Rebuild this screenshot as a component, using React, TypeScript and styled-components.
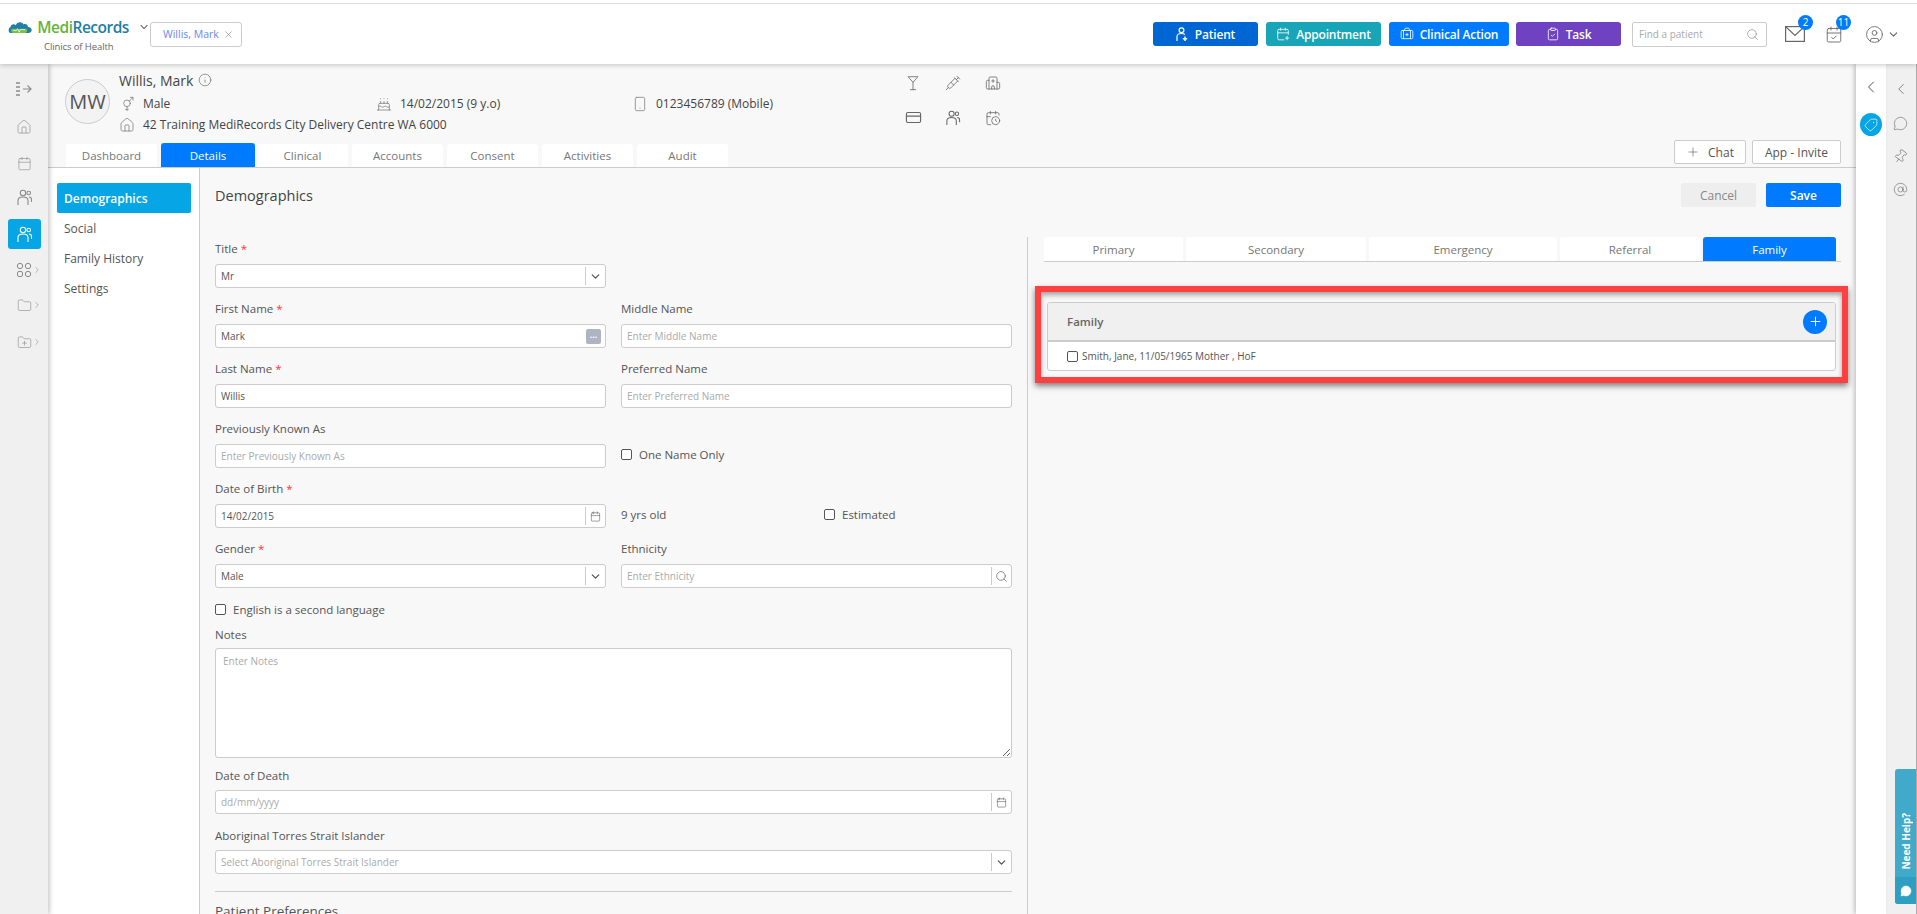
import React from "react";
import styled, { createGlobalStyle } from "styled-components";
import {
  AtSign,
  BriefcaseMedical,
  Cake,
  Calendar,
  CalendarCheck,
  CalendarClock,
  CalendarPlus,
  ChevronDown,
  ChevronLeft,
  ChevronRight,
  CircleUser,
  ClipboardCheck,
  CreditCard,
  Folder,
  FolderPlus,
  Hospital,
  House,
  Info,
  Martini,
  MessageCircle,
  Pin,
  Plus,
  Printer,
  Search,
  Smartphone,
  Syringe,
  Tag,
  Users,
  VenusAndMars,
  X,
} from "lucide-react";

const GlobalStyle = createGlobalStyle`
  html, body { margin: 0; padding: 0; height: 100%; overflow: hidden; }
  * { box-sizing: border-box; }
  body { font-family: "Open Sans", "Noto Sans", sans-serif; color: #555; background: #fff; }
`;

const Page = styled.div`
  position: relative;
  width: 1917px;
  height: 914px;
  display: flex;
  flex-direction: column;
  overflow: hidden;
  border-top: 3px solid #fff;
`;
const TopBar = styled.header`
  position: relative;
  z-index: 5;
  height: 61px;
  flex: none;
  display: flex;
  align-items: center;
  padding: 0 0 0 8px;
  background: #fff;
  border-top: 1px solid #dfdfdf;
  box-shadow: 0 1px 5px rgba(0, 0, 0, 0.22);
`;
const Brand = styled.div`
  display: flex;
  flex-direction: column;
  width: 142px;
  flex: none;
  margin-top: 2px;
`;
const BrandRow = styled.div`
  display: flex;
  align-items: center;
  gap: 5px;
  height: 20px;
`;
const BrandName = styled.span`
  font-size: 15.5px;
  font-weight: 600;
  letter-spacing: -0.5px;
  color: #1f7fa6;
`;
const BrandGreen = styled.span`
  color: #68b23a;
`;
const BrandSub = styled.div`
  font-size: 9.5px;
  color: #666;
  margin: 3px 0 0 36px;
  letter-spacing: -0.1px;
`;
const PatientChip = styled.div`
  width: 92px;
  height: 25px;
  flex: none;
  display: flex;
  align-items: center;
  justify-content: space-between;
  padding: 0 7px 0 12px;
  border: 1px solid #ccc;
  border-radius: 3px;
  font-size: 10.5px;
  color: #5a7cf0;
  color: #6c86f2;
`;
const ActionGroup = styled.div`
  margin-left: auto;
  display: flex;
  align-items: center;
`;
const ActionButton = styled.button<{ $bg: string; $w: number; $gap: number }>`
  width: ${(p) => p.$w}px;
  height: 24px;
  margin-right: ${(p) => p.$gap}px;
  display: flex;
  align-items: center;
  justify-content: center;
  gap: 6px;
  padding: 0;
  border: 0;
  border-radius: 3px;
  background: ${(p) => p.$bg};
  color: #fff;
  font-family: inherit;
  font-size: 12px;
  font-weight: 600;
  letter-spacing: -0.2px;
`;
const FindBox = styled.div`
  width: 135px;
  height: 25px;
  display: flex;
  align-items: center;
  justify-content: space-between;
  padding: 0 7px 0 6px;
  border: 1px solid #ccc;
  border-radius: 2px;
  font-size: 10px;
  color: #aaa;
  margin: 0 18px 0 11px;
`;
const NotifyIcon = styled.div<{ $w: number }>`
  position: relative;
  width: ${(p) => p.$w}px;
  height: 24px;
  display: flex;
  align-items: center;
  color: #666;
`;
const Badge = styled.span`
  position: absolute;
  top: -7px;
  right: -8px;
  min-width: 15px;
  height: 15px;
  border-radius: 50%;
  background: #007bff;
  color: #fff;
  font-size: 10px;
  line-height: 15px;
  text-align: center;
`;
const UserMenu = styled.div`
  display: flex;
  align-items: center;
  gap: 3px;
  color: #666;
  margin: 0 17px 0 22px;
`;

const Body = styled.div`
  flex: 1;
  display: flex;
  min-height: 0;
`;
const SideBar = styled.nav`
  position: relative;
  z-index: 3;
  width: 48px;
  flex: none;
  display: flex;
  flex-direction: column;
  align-items: center;
  background: #f0f0f0;
  box-shadow: 2px 0 4px rgba(0, 0, 0, 0.2);
  padding-top: 10px;
  color: #8b8b8b;
`;
const SideIcon = styled.div<{ $active?: boolean; $mb: number }>`
  position: relative;
  width: 33px;
  height: 30px;
  margin-bottom: ${(p) => p.$mb}px;
  display: flex;
  align-items: center;
  justify-content: center;
  border-radius: 3px;
  background: ${(p) => (p.$active ? "#06a5e6" : "transparent")};
  color: ${(p) => (p.$active ? "#fff" : "#8b8b8b")};
`;
const SideCaret = styled.span`
  position: absolute;
  right: -1px;
  top: 10px;
  display: flex;
  color: #aaa;
`;
const Main = styled.main`
  flex: 1;
  min-width: 0;
  display: flex;
  flex-direction: column;
  background: #f8f8f8;
`;
const PatientHeader = styled.section`
  height: 79px;
  flex: none;
  display: flex;
  padding-left: 17px;
`;
const Avatar = styled.div`
  width: 45px;
  height: 45px;
  margin-top: 15px;
  flex: none;
  display: flex;
  align-items: center;
  justify-content: center;
  border: 1px solid #ccc;
  border-radius: 50%;
  background: #f3f3f3;
  font-size: 20px;
  color: #555;
`;
const PatientInfo = styled.div`
  width: 774px;
  flex: none;
  margin-left: 9px;
  padding-top: 7px;
`;
const PatientName = styled.div`
  display: flex;
  align-items: center;
  gap: 5px;
  height: 18px;
  font-size: 14px;
  color: #444;
`;
const InfoRow = styled.div`
  display: grid;
  grid-template-columns: 257px 256px auto;
  height: 21px;
  align-items: center;
  margin-top: 4px;
`;
const InfoItem = styled.div`
  display: flex;
  align-items: center;
  gap: 8px;
  font-size: 12px;
  color: #444;
  white-space: nowrap;
  svg {
    color: #777;
    flex: none;
  }
`;
const AlertGrid = styled.div`
  display: grid;
  grid-template-columns: repeat(3, 40px);
  grid-auto-rows: 35px;
  padding-top: 1px;
  color: #666;
  > * {
    display: flex;
    align-items: center;
    justify-content: center;
  }
`;
const TabRow = styled.div`
  height: 25px;
  flex: none;
  display: flex;
  align-items: flex-end;
  padding: 0 15px 0 18px;
  margin-left: 2px;
  margin-left: 0;
  border-bottom: 1px solid #ccc;
`;
const MainTab = styled.div<{ $active?: boolean }>`
  width: ${(p) => (p.$active ? 94 : 91)}px;
  height: ${(p) => (p.$active ? 24 : 23)}px;
  margin-right: ${(p) => (p.$active ? 2 : 4)}px;
  display: flex;
  align-items: center;
  justify-content: center;
  border-radius: 3px 3px 0 0;
  background: ${(p) => (p.$active ? "#007bff" : "#fff")};
  color: ${(p) => (p.$active ? "#fff" : "#777")};
  font-size: 11.5px;
`;
const HeaderButtons = styled.div`
  margin-left: auto;
  align-self: flex-start;
  margin-top: -3px;
  display: flex;
  gap: 6px;
`;
const OutlineButton = styled.button<{ $w: number }>`
  width: ${(p) => p.$w}px;
  height: 24px;
  display: flex;
  align-items: center;
  justify-content: center;
  gap: 8px;
  padding: 0;
  border: 1px solid #ccc;
  border-radius: 2px;
  background: #fff;
  color: #555;
  font-family: inherit;
  font-size: 12px;
`;
const Content = styled.div`
  flex: 1;
  display: flex;
  min-height: 0;
`;
const SubNav = styled.aside`
  width: 152px;
  flex: none;
  padding: 15px 8px 0 9px;
  background: #fff;
  border-right: 1px solid #ccc;
`;
const SubNavItem = styled.div<{ $active?: boolean }>`
  height: 30px;
  display: flex;
  align-items: center;
  padding-left: 7px;
  border-radius: 2px;
  background: ${(p) => (p.$active ? "#06a5e6" : "transparent")};
  color: ${(p) => (p.$active ? "#fff" : "#555")};
  font-size: 12px;
  font-weight: ${(p) => (p.$active ? 600 : 400)};
`;
const Panel = styled.div`
  flex: 1;
  min-width: 0;
  display: flex;
  flex-direction: column;
`;
const PanelHead = styled.div`
  height: 69px;
  flex: none;
  display: flex;
  justify-content: space-between;
  align-items: flex-start;
  padding: 15px 15px 0 15px;
`;
const PanelTitle = styled.h2`
  margin: 3px 0 0;
  font-size: 14.5px;
  line-height: 20px;
  font-weight: 400;
  color: #444;
`;
const PanelButtons = styled.div`
  display: flex;
  gap: 10px;
`;
const FlatButton = styled.button<{ $primary?: boolean }>`
  width: 75px;
  height: 24px;
  padding: 0;
  border: 0;
  border-radius: 2px;
  background: ${(p) => (p.$primary ? "#007bff" : "#eee")};
  color: ${(p) => (p.$primary ? "#fff" : "#888")};
  font-family: inherit;
  font-size: 12px;
  font-weight: ${(p) => (p.$primary ? 600 : 400)};
`;
const Split = styled.div`
  flex: 1;
  display: flex;
  min-height: 0;
`;
const FormColumn = styled.form`
  width: 827px;
  flex: none;
  padding: 2px 15px 0;
`;
const FormRow = styled.div<{ $h?: number }>`
  display: grid;
  grid-template-columns: 391px 391px;
  column-gap: 15px;
  height: ${(p) => p.$h ?? 60}px;
`;
const Field = styled.div`
  display: flex;
  flex-direction: column;
`;
const Label = styled.label`
  height: 20px;
  line-height: 20px;
  margin-bottom: 5px;
  font-size: 11.5px;
  color: #555;
`;
const Required = styled.span`
  color: #f33;
  margin-left: 3px;
`;
const Control = styled.div`
  height: 24px;
  display: flex;
  align-items: center;
  border: 1px solid #ccc;
  border-radius: 3px;
  background: #fff;
`;
const TextInput = styled.input`
  flex: 1;
  min-width: 0;
  height: 100%;
  padding: 0 5px;
  border: 0;
  outline: 0;
  background: transparent;
  font-family: inherit;
  font-size: 10px;
  color: #555;
  &::placeholder {
    color: #aaa;
    opacity: 1;
  }
`;
const Addon = styled.span`
  width: 20px;
  height: 18px;
  flex: none;
  display: flex;
  align-items: center;
  justify-content: center;
  border-left: 1px solid #ccc;
  color: #555;
`;
const MoreDots = styled.span`
  width: 15px;
  height: 15px;
  margin-right: 4px;
  flex: none;
  display: flex;
  align-items: center;
  justify-content: center;
  border-radius: 2px;
  background: #aeb4c2;
  color: #fff;
  font-size: 9px;
  font-weight: 700;
  line-height: 9px;
`;
const CheckLine = styled.label<{ $pt?: number }>`
  display: flex;
  align-items: center;
  gap: 7px;
  height: 20px;
  margin-top: ${(p) => p.$pt ?? 0}px;
  font-size: 11.5px;
  color: #555;
`;
const Box = styled.input.attrs({ type: "checkbox" })`
  width: 11px;
  height: 11px;
  margin: 0;
  flex: none;
  appearance: none;
  border: 1px solid #555;
  border-radius: 2px;
  background: #fff;
`;
const AgeCells = styled.div`
  display: grid;
  grid-template-columns: 203px auto;
  align-items: center;
  height: 20px;
  margin-top: 25px;
  font-size: 11.5px;
`;
const NotesArea = styled.textarea`
  display: block;
  width: 100%;
  height: 110px;
  padding: 5px 7px;
  border: 1px solid #ccc;
  border-radius: 3px;
  background: #fff;
  outline: 0;
  font-family: inherit;
  font-size: 10px;
  &::placeholder {
    color: #aaa;
    opacity: 1;
  }
`;
const WideField = styled.div<{ $mb: number }>`
  margin-bottom: ${(p) => p.$mb}px;
  width: 797px;
  ${Label} {
    display: block;
  }
`;
const Divider = styled.hr`
  width: 797px;
  margin: 0;
  border: 0;
  border-top: 1px solid #ccc;
`;
const SectionTitle = styled.div`
  margin-top: 10px;
  font-size: 13.5px;
  color: #555;
`;
const LinkColumn = styled.div`
  flex: 1;
  min-width: 0;
  padding: 0 15px 0 16px;
  border-left: 1px solid #ccc;
`;
const LinkTabs = styled.div`
  display: flex;
  height: 25px;
  gap: 3px;
  align-items: flex-start;
  border-bottom: 1px solid #ccc;
`;
const LinkTab = styled.div<{ $w: number; $active?: boolean }>`
  width: ${(p) => p.$w}px;
  height: 24px;
  display: flex;
  align-items: center;
  justify-content: center;
  border-radius: 3px 3px 0 0;
  background: ${(p) => (p.$active ? "#007bff" : "#fff")};
  color: ${(p) => (p.$active ? "#fff" : "#777")};
  font-size: 11.5px;
`;
const Highlight = styled.div`
  margin: 24px -7px 0 -9px;
  padding: 10px 6px 6px;
  border: 6px solid #ff4040;
  box-shadow: 0 3px 6px rgba(0, 0, 0, 0.5), inset 0 3px 5px rgba(0, 0, 0, 0.35);
`;
const FamilyCard = styled.div`
  border: 1px solid #ccc;
  border-radius: 3px;
  background: #fff;
  overflow: hidden;
`;
const FamilyHead = styled.div`
  height: 39px;
  display: flex;
  align-items: center;
  justify-content: space-between;
  padding: 0 8px 0 19px;
  background: #f0f0f0;
  border-bottom: 2px solid #ccc;
  font-size: 11.5px;
  font-weight: 600;
  color: #666;
`;
const RoundAdd = styled.span`
  width: 24px;
  height: 24px;
  display: flex;
  align-items: center;
  justify-content: center;
  border-radius: 50%;
  background: #007bff;
  color: #fff;
`;
const FamilyRow = styled.div`
  height: 28px;
  display: flex;
  align-items: center;
  gap: 4px;
  padding-left: 19px;
  font-size: 10px;
  color: #555;
`;
const RailOne = styled.aside`
  position: relative;
  z-index: 2;
  width: 30px;
  flex: none;
  display: flex;
  flex-direction: column;
  align-items: center;
  padding-top: 13px;
  background: #fff;
  box-shadow: -2px 0 4px rgba(0, 0, 0, 0.2);
  color: #555;
`;
const TagBubble = styled.span`
  width: 22px;
  height: 23px;
  margin-top: 16px;
  display: flex;
  align-items: center;
  justify-content: center;
  border-radius: 50%;
  background: #06a5e6;
  color: #fff;
`;
const RailTwo = styled.aside`
  width: 31px;
  flex: none;
  display: flex;
  flex-direction: column;
  align-items: center;
  gap: 18px;
  padding: 16px 1px 0 0;
  background: #f0f0f0;
  border-right: 1px solid #aaa;
  color: #777;
`;
const PrintTab = styled.div`
  position: absolute;
  left: 0;
  top: 807px;
  width: 12px;
  height: 30px;
  display: flex;
  align-items: center;
  justify-content: flex-end;
  overflow: hidden;
  background: #444;
  color: #fff;
  box-shadow: 1px 1px 2px rgba(0, 0, 0, 0.4);
`;
const HelpTab = styled.div`
  position: absolute;
  right: 1px;
  top: 766px;
  width: 21px;
  height: 135px;
  display: flex;
  flex-direction: column;
  align-items: center;
  justify-content: flex-end;
  border-radius: 3px 0 0 3px;
  overflow: hidden;
  background: #41a9c9;
`;
const HelpText = styled.span`
  writing-mode: vertical-rl;
  transform: rotate(180deg);
  margin-bottom: 7px;
  color: #fff;
  font-size: 10px;
  font-weight: 700;
`;
const HelpBubble = styled.span`
  width: 100%;
  height: 27px;
  flex: none;
  display: flex;
  align-items: center;
  justify-content: center;
  background: #2e9fc0;
  color: #fff;
`;

const Logo = () => (
  <svg width="28" height="16" viewBox="0 0 28 16">
    <path d="M3 15C0 15 0 9 3 8c0-3 4-4 6-2 1-4 7-5 9-1 2-1 5 0 5 3 3 0 5 2 4 5-1 1-2 2-3 2Z" fill="#1f7fa6" />
    <path d="M6 15c-2 0-3-2-2-5h17c2 2 1 5-2 5Z" fill="#7cc04b" />
    <path d="M6 12h4l1-2 2 4 1-3h6" fill="none" stroke="#fff" strokeWidth="0.8" />
  </svg>
);

const ExpandIcon = () => (
  <svg width="18" height="16" viewBox="0 0 18 16" fill="none" stroke="currentColor" strokeWidth="1.1">
    <path d="M1 2h4M1 6h4M1 10h4M1 14h4" strokeWidth="1.6" />
    <path d="M8 8h8M12.5 4.5 16 8l-3.5 3.5" />
  </svg>
);

const AppsIcon = () => (
  <svg width="16" height="16" viewBox="0 0 16 16" fill="none" stroke="currentColor" strokeWidth="1">
    <circle cx="4" cy="4" r="2.7" />
    <circle cx="12" cy="4" r="2.7" />
    <rect x="1.5" y="9.5" width="5" height="5" rx="1.5" />
    <circle cx="12" cy="12" r="2.7" />
  </svg>
);

const MailIcon = () => (
  <svg width="20" height="16" viewBox="0 0 20 16" fill="none" stroke="currentColor" strokeWidth="1.2">
    <rect x="0.6" y="0.6" width="18.8" height="14.8" />
    <path d="M0.6 0.6 10 9.5 19.4 0.6" />
  </svg>
);

const PatientPlusIcon = () => (
  <svg width="13" height="15" viewBox="0 0 13 15" fill="none" stroke="currentColor" strokeWidth="1.2">
    <circle cx="5.5" cy="3.2" r="2.4" />
    <path d="M1 14V9.5C1 7.5 3 6.5 5.5 6.5c1.4 0 2.6.3 3.4 1" />
    <path d="M9 9.5V14M6.8 11.8h4.4" strokeWidth="1.5" />
  </svg>
);

const PeopleIcon = ({ size = 17 }: { size?: number }) => (
  <svg width={size} height={size} viewBox="0 0 17 17" fill="none" stroke="currentColor" strokeWidth="1.1">
    <circle cx="7" cy="4" r="2.7" />
    <circle cx="12.7" cy="4" r="1.8" />
    <path d="M2 16v-4.500C2 9 4 8 7 8s5 1 5 3.500V16" />
    <path d="M13 8c1.500 0 2.500 1 2.500 2.500V13" />
  </svg>
);

const labelled = (
  label: string,
  required: boolean,
  control: React.ReactNode
) => (
  <Field>
    <Label>
      {label}
      {required && <Required>*</Required>}
    </Label>
    {control}
  </Field>
);

const SelectControl = ({ value, placeholder }: { value?: string; placeholder?: string }) => (
  <Control>
    <TextInput readOnly defaultValue={value} placeholder={placeholder} />
    <Addon>
      <ChevronDown size={13} strokeWidth={2.4} />
    </Addon>
  </Control>
);

const DateControl = ({ value, placeholder }: { value?: string; placeholder?: string }) => (
  <Control>
    <TextInput readOnly defaultValue={value} placeholder={placeholder} />
    <Addon>
      <Calendar size={11} strokeWidth={1.2} />
    </Addon>
  </Control>
);

const InputControl = ({ value, placeholder }: { value?: string; placeholder?: string }) => (
  <Control>
    <TextInput readOnly defaultValue={value} placeholder={placeholder} />
  </Control>
);

const mainTabs = ["Dashboard", "Details", "Clinical", "Accounts", "Consent", "Activities", "Audit"];
const linkTabs = [
  { name: "Primary", w: 139 },
  { name: "Secondary", w: 180 },
  { name: "Emergency", w: 188 },
  { name: "Referral", w: 140 },
  { name: "Family", w: 133 },
];

const App = () => {
  return (
    <Page>
      <GlobalStyle />
      <TopBar>
        <Brand>
          <BrandRow>
            <Logo />
            <BrandName>
              <BrandGreen>Medi</BrandGreen>Records
            </BrandName>
            <ChevronDown size={14} color="#666" style={{ marginLeft: 4 }} />
          </BrandRow>
          <BrandSub>Clinics of Health</BrandSub>
        </Brand>
        <PatientChip>
          Willis, Mark
          <X size={11} color="#888" strokeWidth={1.4} />
        </PatientChip>
        <ActionGroup>
          <ActionButton $bg="#0066d3" $w={105} $gap={8}>
            <PatientPlusIcon />
            Patient
          </ActionButton>
          <ActionButton $bg="#18a5b8" $w={115} $gap={8}>
            <CalendarPlus size={14} strokeWidth={1.4} />
            Appointment
          </ActionButton>
          <ActionButton $bg="#007bff" $w={120} $gap={7}>
            <BriefcaseMedical size={14} strokeWidth={1.4} />
            Clinical Action
          </ActionButton>
          <ActionButton $bg="#6f42c1" $w={105} $gap={0}>
            <ClipboardCheck size={14} strokeWidth={1.4} />
            Task
          </ActionButton>
          <FindBox>
            Find a patient
            <Search size={13} color="#888" strokeWidth={1.2} />
          </FindBox>
          <NotifyIcon $w={20} style={{ marginRight: 20 }}>
            <MailIcon />
            <Badge>2</Badge>
          </NotifyIcon>
          <NotifyIcon $w={18}>
            <CalendarCheck size={19} strokeWidth={1.2} />
            <Badge>11</Badge>
          </NotifyIcon>
          <UserMenu>
            <CircleUser size={19} strokeWidth={1.1} />
            <ChevronDown size={13} strokeWidth={2} />
          </UserMenu>
        </ActionGroup>
      </TopBar>
      <Body>
        <SideBar>
          <SideIcon $mb={8}>
            <ExpandIcon />
          </SideIcon>
          <SideIcon $mb={6}>
            <House size={16} strokeWidth={1} />
          </SideIcon>
          <SideIcon $mb={4}>
            <Calendar size={15} strokeWidth={1} />
          </SideIcon>
          <SideIcon $mb={7}>
            <PeopleIcon />
          </SideIcon>
          <SideIcon $active $mb={6}>
            <PeopleIcon />
          </SideIcon>
          <SideIcon $mb={5}>
            <AppsIcon />
            <SideCaret>
              <ChevronRight size={10} />
            </SideCaret>
          </SideIcon>
          <SideIcon $mb={7}>
            <Folder size={15} strokeWidth={1} />
            <SideCaret>
              <ChevronRight size={10} />
            </SideCaret>
          </SideIcon>
          <SideIcon $mb={0}>
            <FolderPlus size={15} strokeWidth={1} />
            <SideCaret>
              <ChevronRight size={10} />
            </SideCaret>
          </SideIcon>
        </SideBar>
        <Main>
          <PatientHeader>
            <Avatar>MW</Avatar>
            <PatientInfo>
              <PatientName>
                Willis, Mark
                <Info size={14} strokeWidth={1} color="#555" />
              </PatientName>
              <InfoRow>
                <InfoItem>
                  <VenusAndMars size={16} strokeWidth={1.1} />
                  Male
                </InfoItem>
                <InfoItem>
                  <Cake size={16} strokeWidth={1.1} />
                  14/02/2015 (9 y.o)
                </InfoItem>
                <InfoItem>
                  <Smartphone size={16} strokeWidth={1.1} />
                  0123456789 (Mobile)
                </InfoItem>
              </InfoRow>
              <InfoRow style={{ marginTop: 0 }}>
                <InfoItem>
                  <House size={16} strokeWidth={1.1} />
                  42 Training MediRecords City Delivery Centre WA 6000
                </InfoItem>
              </InfoRow>
            </PatientInfo>
            <AlertGrid>
              <span>
                <Martini size={16} strokeWidth={1.2} />
              </span>
              <span>
                <Syringe size={16} strokeWidth={1.2} />
              </span>
              <span>
                <Hospital size={16} strokeWidth={1.2} />
              </span>
              <span>
                <CreditCard size={17} strokeWidth={1.6} />
              </span>
              <span>
                <PeopleIcon size={16} />
              </span>
              <span>
                <CalendarClock size={16} strokeWidth={1.2} />
              </span>
            </AlertGrid>
          </PatientHeader>
          <TabRow>
            {mainTabs.map((t) => (
              <MainTab key={t} $active={t === "Details"}>
                {t}
              </MainTab>
            ))}
            <HeaderButtons>
              <OutlineButton $w={72}>
                <Plus size={14} strokeWidth={1} />
                Chat
              </OutlineButton>
              <OutlineButton $w={89}>App - Invite</OutlineButton>
            </HeaderButtons>
          </TabRow>
          <Content>
            <SubNav>
              <SubNavItem $active>Demographics</SubNavItem>
              <SubNavItem>Social</SubNavItem>
              <SubNavItem>Family History</SubNavItem>
              <SubNavItem>Settings</SubNavItem>
            </SubNav>
            <Panel>
              <PanelHead>
                <PanelTitle>Demographics</PanelTitle>
                <PanelButtons>
                  <FlatButton>Cancel</FlatButton>
                  <FlatButton $primary>Save</FlatButton>
                </PanelButtons>
              </PanelHead>
              <Split>
                <FormColumn>
                  <FormRow>{labelled("Title", true, <SelectControl value="Mr" />)}</FormRow>
                  <FormRow>
                    {labelled(
                      "First Name",
                      true,
                      <Control>
                        <TextInput readOnly defaultValue="Mark" />
                        <MoreDots>···</MoreDots>
                      </Control>
                    )}
                    {labelled("Middle Name", false, <InputControl placeholder="Enter Middle Name" />)}
                  </FormRow>
                  <FormRow>
                    {labelled("Last Name", true, <InputControl value="Willis" />)}
                    {labelled("Preferred Name", false, <InputControl placeholder="Enter Preferred Name" />)}
                  </FormRow>
                  <FormRow>
                    {labelled("Previously Known As", false, <InputControl placeholder="Enter Previously Known As" />)}
                    <CheckLine $pt={25}>
                      <Box />
                      One Name Only
                    </CheckLine>
                  </FormRow>
                  <FormRow>
                    {labelled("Date of Birth", true, <DateControl value="14/02/2015" />)}
                    <AgeCells>
                      <span>9 yrs old</span>
                      <CheckLine>
                        <Box />
                        Estimated
                      </CheckLine>
                    </AgeCells>
                  </FormRow>
                  <FormRow>
                    {labelled("Gender", true, <SelectControl value="Male" />)}
                    {labelled(
                      "Ethnicity",
                      false,
                      <Control>
                        <TextInput readOnly placeholder="Enter Ethnicity" />
                        <Addon>
                          <Search size={13} strokeWidth={1.2} />
                        </Addon>
                      </Control>
                    )}
                  </FormRow>
                  <CheckLine>
                    <Box />
                    English is a second language
                  </CheckLine>
                  <WideField $mb={8} style={{ marginTop: 6 }}>
                    <Label style={{ marginBottom: 3 }}>Notes</Label>
                    <NotesArea readOnly placeholder="Enter Notes" />
                  </WideField>
                  <WideField $mb={12}>
                    <Label style={{ marginBottom: 4 }}>Date of Death</Label>
                    <DateControl placeholder="dd/mm/yyyy" />
                  </WideField>
                  <WideField $mb={17}>
                    <Label style={{ marginBottom: 4 }}>Aboriginal Torres Strait Islander</Label>
                    <SelectControl placeholder="Select Aboriginal Torres Strait Islander" />
                  </WideField>
                  <Divider />
                  <SectionTitle>Patient Preferences</SectionTitle>
                </FormColumn>
                <LinkColumn>
                  <LinkTabs>
                    {linkTabs.map((t) => (
                      <LinkTab key={t.name} $w={t.w} $active={t.name === "Family"}>
                        {t.name}
                      </LinkTab>
                    ))}
                  </LinkTabs>
                  <Highlight>
                    <FamilyCard>
                      <FamilyHead>
                        Family
                        <RoundAdd>
                          <Plus size={15} strokeWidth={1.6} />
                        </RoundAdd>
                      </FamilyHead>
                      <FamilyRow>
                        <Box />
                        Smith, Jane, 11/05/1965 Mother , HoF
                      </FamilyRow>
                    </FamilyCard>
                  </Highlight>
                </LinkColumn>
              </Split>
            </Panel>
          </Content>
        </Main>
        <RailOne>
          <ChevronLeft size={20} strokeWidth={1.2} />
          <TagBubble>
            <Tag size={14} strokeWidth={1.2} style={{ transform: "rotate(90deg)" }} />
          </TagBubble>
        </RailOne>
        <RailTwo>
          <ChevronLeft size={18} strokeWidth={1.2} />
          <MessageCircle size={15} strokeWidth={1.1} />
          <Pin size={15} strokeWidth={1.1} style={{ transform: "rotate(35deg)" }} />
          <AtSign size={15} strokeWidth={1.1} />
        </RailTwo>
      </Body>
      <PrintTab>
        <Printer size={14} strokeWidth={1.6} style={{ marginRight: -5, flex: "none" }} />
      </PrintTab>
      <HelpTab>
        <HelpText>Need Help?</HelpText>
        <HelpBubble>
          <MessageCircle size={12} fill="#fff" strokeWidth={1} />
        </HelpBubble>
      </HelpTab>
    </Page>
  );
};

export default App;
